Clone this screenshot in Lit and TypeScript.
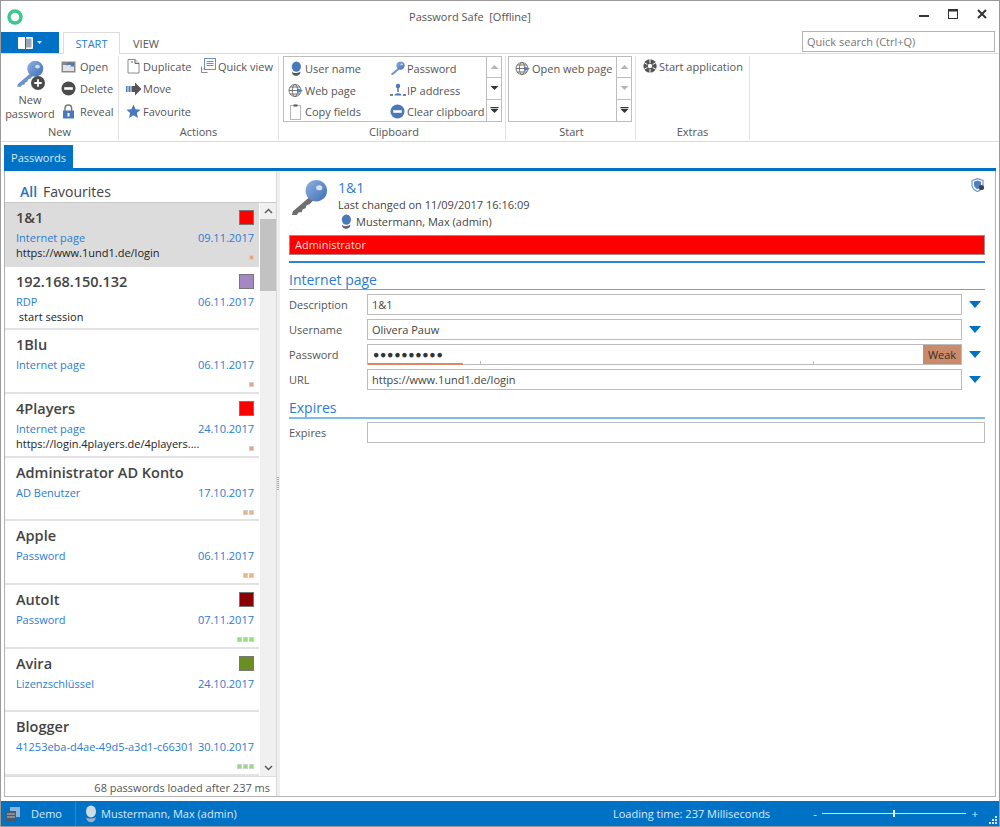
import { LitElement, html, css } from 'lit';
import { customElement } from 'lit/decorators.js';

const BLUE = '#0072c6';

const keyIcon = (shaft: string, size: number) => html`<svg width="${size}" height="${size}" viewBox="0 0 40 40">
  <defs><linearGradient id="kh" x1="0" y1="0" x2="1" y2="1"><stop offset="0" stop-color="#8fb2e2"/><stop offset="1" stop-color="#3f6db5"/></linearGradient></defs>
  <path d="M23 17 4 33l-1 4 5 0 2-3 3 0 1-3 3-1 1-3 3-1 5-5z" fill="${shaft}"/>
  <circle cx="28" cy="12" r="11" fill="url(#kh)"/>
  <ellipse cx="31" cy="9" rx="3.2" ry="2.6" fill="#d5e2f5"/>
</svg>`;

const userIcon = (body = '#4a78bd', base = '#555') => html`<svg width="14" height="16" viewBox="0 0 14 16">
  <ellipse cx="7.4" cy="5.6" rx="4.6" ry="5.2" fill="${body}"/>
  <path d="M3 10.4c1 2 7 2.2 8.6.2l-.6 2.2C9 15.6 5 15.4 3.4 13z" fill="${base}"/>
</svg>`;

const globeIcon = () => html`<svg width="16" height="15" viewBox="0 0 16 15">
  <g fill="none" stroke="#666" stroke-width=".9"><circle cx="7" cy="7.5" r="6"/><ellipse cx="7" cy="7.5" rx="2.6" ry="6"/><path d="M1 7.5h12M2 4h10M2 11h10"/></g>
  <path d="M10 5.5l5 2.2-5 2.4z" fill="#4a82c8"/>
</svg>`;

const circleMinus = (fill: string, size = 15) => html`<svg width="${size}" height="${size}" viewBox="0 0 15 15">
  <circle cx="7.5" cy="7.5" r="7" fill="${fill}"/><rect x="3.2" y="6.2" width="8.6" height="2.6" fill="#fff"/>
</svg>`;

const openIcon = () => html`<svg width="15" height="13" viewBox="0 0 15 13">
  <rect x=".5" y="1.5" width="14" height="11" fill="#8a8a8a"/><rect x="2" y="5" width="11" height="6" fill="#e4e4e4"/>
  <path d="M5 5c1-3 5-3.6 7-1.5l1-1v4H9l1.300-1.200C9 4.200 7 4.200 6.500 5.500z" fill="#4a78bd"/>
</svg>`;

const lockIcon = () => html`<svg width="13" height="15" viewBox="0 0 13 15">
  <path d="M3 7V4.300a3.300 3.300 0 0 1 6.600 0V7" fill="none" stroke="#777" stroke-width="1.5"/>
  <rect x="1" y="6.500" width="11" height="8" fill="#4a78bd"/><rect x="5.500" y="9" width="2" height="3.5" fill="#fff"/>
</svg>`;

const docIcon = () => html`<svg width="13" height="16" viewBox="0 0 13 16">
  <path d="M1 1.500h7l4 4v9.500H1z" fill="#fff" stroke="#8c8c8c"/><path d="M8 1.500v4h4" fill="#ddd" stroke="#666"/>
  <path d="M4 4h2" stroke="#666"/>
</svg>`;

const quickIcon = () => html`<svg width="16" height="16" viewBox="0 0 16 16">
  <rect x="4.500" y=".5" width="11" height="11" fill="#fff" stroke="#6f8fc0"/>
  <path d="M6.500 3.500h7M6.500 5.500h7M6.500 7.500h7" stroke="#8a8a8a"/>
  <path d="M1.500 8.500v6h6" fill="none" stroke="#888"/><path d="M3 11.500l2-2" stroke="#888"/>
</svg>`;

const moveIcon = () => html`<svg width="16" height="14" viewBox="0 0 16 14">
  <rect x="0" y="4" width="1.5" height="6" fill="#4a78bd"/><rect x="2.500" y="4" width="2" height="6" fill="#4a78bd"/>
  <path d="M5.500 4H9V.5L15.500 7 9 13.500V10H5.500z" fill="#555"/>
</svg>`;

const starIcon = () => html`<svg width="15" height="15" viewBox="0 0 15 15">
  <path d="M7.500.5l2.100 4.700 5 .5-3.800 3.300 1.200 5-4.500-2.700L3 14l1.200-5L.4 5.700l5-.5z" fill="#4a78bd"/>
</svg>`;

const clipIcon = () => html`<svg width="11" height="16" viewBox="0 0 11 16">
  <rect x=".5" y="1.500" width="10" height="14" fill="#fff" stroke="#b8b8b8"/><rect x="3.500" y=".5" width="4" height="2" fill="#555"/>
</svg>`;

const netIcon = () => html`<svg width="16" height="14" viewBox="0 0 16 14">
  <circle cx="8" cy="3" r="2.200" fill="#4a78bd"/><path d="M8 5v4" stroke="#4a78bd" stroke-width="1.5"/>
  <path d="M4.500 12.500c0-3 7-3 7 0z" fill="#4a78bd"/><path d="M0 12h3M13 12h3" stroke="#555" stroke-width="1.5"/>
</svg>`;

const gearIcon = () => html`<svg width="14" height="14" viewBox="0 0 14 14">
  <circle cx="7" cy="7" r="6.700" fill="#555"/>
  <g stroke="#fff" stroke-width="1"><path d="M7 0v4M7 10v4M.8 3.500l3.500 2M9.700 8.500l3.500 2M.8 10.500l3.500-2M9.700 5.500l3.500-2"/></g>
  <circle cx="7" cy="7" r="2.200" fill="#fff"/>
</svg>`;

const arrowBtn = (d: string, color: string) => html`<svg width="9" height="6" viewBox="0 0 9 6"><path d="${d}" fill="${color}"/></svg>`;

const UP = 'M4.500 1 8.500 5H.5z';
const DOWN = 'M.5 1h8L4.500 5z';
const MORE = 'M.5 0h8v1.200h-8zM.5 2h8L4.500 6z';

type Item = { name: string; type: string; date: string; url?: string; color?: string; dots: number; dot?: string };

const ITEMS: Item[] = [
  { name: '1&1', type: 'Internet page', date: '09.11.2017', url: 'https://www.1und1.de/login', color: '#ff0000', dots: 1, dot: '#eba47f' },
  { name: '192.168.150.132', type: 'RDP', date: '06.11.2017', url: ' start session', color: '#a488c4', dots: 0 },
  { name: '1Blu', type: 'Internet page', date: '06.11.2017', dots: 1, dot: '#eba47f' },
  { name: '4Players', type: 'Internet page', date: '24.10.2017', url: 'https://login.4players.de/4players....', color: '#ff0000', dots: 1, dot: '#eba47f' },
  { name: 'Administrator AD Konto', type: 'AD Benutzer', date: '17.10.2017', dots: 2, dot: '#ecb27f' },
  { name: 'Apple', type: 'Password', date: '06.11.2017', dots: 2, dot: '#ecb27f' },
  { name: 'AutoIt', type: 'Password', date: '07.11.2017', color: '#8b0000', dots: 3, dot: '#8fe07c' },
  { name: 'Avira', type: 'Lizenzschlüssel', date: '24.10.2017', color: '#6b8e23', dots: 0 },
  { name: 'Blogger', type: '41253eba-d4ae-49d5-a3d1-c66301', date: '30.10.2017', dots: 3, dot: '#8fe07c' },
];

@customElement('app-root')
export class AppRoot extends LitElement {
  static styles = css`
    :host {
      display: flex;
      flex-direction: column;
      width: 1000px;
      height: 827px;
      box-sizing: border-box;
      border: 1px solid #9a9a9a;
      background: #fff;
      font-family: 'Open Sans', 'Noto Sans', sans-serif;
      font-size: 11px;
      color: #444;
      overflow: hidden;
    }
    svg { display: block; flex: none; }

    .titlebar { display: flex; align-items: center; height: 31px; flex: none; }
    .logo { width: 29px; padding-left: 6px; box-sizing: border-box; }
    .title { flex: 1; text-align: center; color: #555; }
    .winbtns { width: 89px; display: flex; gap: 19px; padding-left: 9px; margin-bottom: 5px; box-sizing: border-box; align-items: center; }

    .tabrow { display: flex; height: 22px; flex: none; border-bottom: 1px solid #dcdcdc; box-sizing: border-box; }
    .appbtn { width: 58px; height: 21px; background: #0072c6; display: flex; align-items: center; justify-content: center; gap: 4px; }
    .tab { height: 22px; box-sizing: border-box; padding: 4px 13px 0; margin-left: 4px; text-transform: uppercase; color: #555; }
    .tab.on { border: 1px solid #dcdcdc; border-bottom: 0; background: #fff; color: #2b7cd3; padding: 3px 0 0; width: 57px; text-align: center; }
    .tab.off { margin-left: 0; }
    .search { margin-left: auto; margin-right: 4px; margin-top: -1px; width: 193px; height: 21px; box-sizing: border-box; border: 1px solid #b4b4b4; padding: 2px 4px; color: #777; background: #fff; }

    .ribbon { display: flex; height: 88px; flex: none; border-bottom: 1px solid #dcdcdc; box-sizing: border-box; }
    .group { display: flex; flex-direction: column; box-sizing: border-box; border-right: 1px solid #e2e2e2; margin: 2px 0 1px; }
    .gbody { flex: 1; display: flex; min-height: 0; }
    .glabel { text-align: center; height: 14px; line-height: 14px; margin-bottom: 1px; color: #555; }
    .g-new { width: 118px; }
    .g-act { width: 160px; }
    .g-clip { width: 227px; padding-left: 4px; }
    .g-start { width: 130px; padding-left: 2px; }
    .g-ext { width: 114px; }

    .bigbtn { width: 58px; display: flex; flex-direction: column; align-items: center; text-align: center; line-height: 14px; padding-top: 4px; color: #555; }
    .bigwrap { position: relative; width: 30px; height: 30px; margin-bottom: 3px; }
    .plus { position: absolute; right: 0; bottom: 0; width: 14px; height: 14px; }
    .col { display: flex; flex-direction: column; margin-top: -1px; }
    .btn { display: flex; align-items: center; height: 22.5px; gap: 4px; color: #555; white-space: nowrap; }
    .btn .ico { width: 15px; display: flex; justify-content: center; }
    .g-new .col { padding-left: 2px; }
    .g-act .col { padding-left: 7px; width: 81px; box-sizing: border-box; }
    .g-act .btn { gap: 2px; }
    .g-act .col + .col { padding-left: 0; width: auto; }
    .g-act .col + .col .btn { gap: 3px; }
    .g-ext .col { padding-left: 6px; }
    .g-ext .btn { gap: 2px; }

    .gallery { display: flex; height: 66px; border: 1px solid #bdbdbd; box-sizing: border-box; flex: 1; margin-right: 3px; }
    .gitems { flex: 1; display: grid; grid-template-columns: 102px 1fr; padding: 1px 0 0 4px; align-content: start; }
    .g-start .gitems { grid-template-columns: 1fr; padding-left: 6px; }
    .scroller { width: 14px; border-left: 1px solid #bdbdbd; display: grid; grid-template-rows: 1fr 1fr 1fr; flex: none; }
    .scroller div { display: flex; align-items: center; justify-content: center; border-bottom: 1px solid #bdbdbd; }
    .scroller div:last-child { border-bottom: 0; }
    .gitems .btn { height: 21.5px; gap: 2px; }

    .doctabs { flex: none; padding-top: 3px; height: 29px; box-sizing: border-box; border-bottom: 3px solid #0072c6; margin: 0 3px; }
    .doctab { width: 69px; height: 23px; background: #0072c6; color: #d8eafa; text-align: center; line-height: 25px; }

    .main { flex: 1; min-height: 0; display: flex; margin: 0 3px 4px 3px; border: 1px solid #b2b2b2; border-top: 0; }
    .left { width: 271px; flex: none; display: flex; flex-direction: column; }
    .filter { height: 32px; flex: none; box-sizing: border-box; padding: 11px 0 0 15px; font-size: 14px; line-height: 20px; border-bottom: 1px solid #c8c8c8; color: #444; }
    .filter b { color: #1f74c4; font-weight: 600; margin-right: 6px; }
    .listwrap { flex: 1; min-height: 0; display: flex; }
    .list { flex: 1; min-width: 0; display: grid; grid-template-rows: repeat(9, 1fr); }
    .item { box-sizing: border-box; padding: 3px 5px 0 11px; border-bottom: 2px solid #e3e3e3; display: flex; flex-direction: column; overflow: hidden; }
    .item.sel { background: #dcdcdc; border-bottom-color: #dcdcdc; }
    .r1 { display: flex; justify-content: space-between; align-items: flex-start; height: 24px; flex: none; }
    .name { font-size: 14.5px; font-weight: 600; color: #444; line-height: 24px; white-space: nowrap; }
    .swatch { width: 15px; height: 15px; box-sizing: border-box; border: 1px solid #777; margin-top: 4px; }
    .r2 { display: flex; color: #2b7cd3; height: 16px; line-height: 16px; flex: none; white-space: nowrap; overflow: hidden; }
    .r2 .t { flex: 1; min-width: 0; overflow: hidden; }
    .r3 { display: flex; justify-content: space-between; height: 16px; line-height: 14px; color: #222; flex: none; white-space: pre; }
    .dots { display: flex; gap: 1px; margin-left: auto; margin-top: 9px; height: 5px; }
    .dots i { display: block; width: 5px; height: 5px; box-sizing: border-box; border: 1px solid #d0d0d0; }
    .scrollbar { width: 17px; flex: none; background: #f0f0f0; display: flex; flex-direction: column; align-items: center; border-left: 1px solid #fff; box-sizing: border-box; }
    .sb-end { height: 16px; flex: none; display: flex; align-items: center; justify-content: center; }
    .thumb { width: 100%; height: 72px; background: #c2c2c2; }
    .sb-fill { flex: 1; }
    .loaded { height: 20px; flex: none; border-top: 1px solid #ddd; box-sizing: border-box; text-align: right; line-height: 22px; padding-right: 6px; color: #555; }

    .splitter { width: 2px; flex: none; background: #f0f0f0; border-left: 1px solid #d8d8d8; border-right: 1px solid #eee; display: flex; align-items: center; justify-content: center; }
    .grip { width: 2px; height: 13px; background: repeating-linear-gradient(#aaa 0 1px, transparent 1px 2px); }

    .right { flex: 1; min-width: 0; padding: 0 10px 0 9px; display: flex; flex-direction: column; }
    .head { display: flex; height: 64px; flex: none; position: relative; padding-top: 8px; box-sizing: border-box; }
    .head .txt { margin-left: 10px; }
    .head h1 { margin: 0; font-size: 14px; font-weight: 400; color: #2b7cd3; line-height: 17px; }
    .head .chg { line-height: 17px; color: #444; }
    .head .usr { display: flex; gap: 3px; align-items: center; line-height: 17px; margin-left: 1px; }
    .shield { position: absolute; right: 0; top: 7px; }
    .redbar { height: 20px; flex: none; background: #ff0000; color: #ffd9d9; border: 1px solid #a88; box-sizing: border-box; padding-left: 5px; line-height: 18px; }
    .rule { height: 2px; background: #2b86cf; margin-top: 6px; flex: none; }
    h2 { margin: 0; font-size: 14px; font-weight: 400; color: #2b7cd3; line-height: 18px; border-bottom: 1px solid #5aa8e0; flex: none; }
    .sec1 { margin-top: 8px; }
    .sec2 { margin-top: 9px; border-bottom: 2px solid #7fbbe8; }
    .rows { display: flex; flex-direction: column; gap: 4px; padding-top: 4px; }
    .sec2 + .rows { padding-top: 3px; }
    .row { display: grid; grid-template-columns: 78px 1fr 23px; align-items: center; height: 21px; }
    .row.wide { grid-template-columns: 78px 1fr; }
    .lbl { color: #555; }
    .field { position: relative; height: 21px; box-sizing: border-box; border: 1px solid #bcbcbc; padding-left: 4px; line-height: 19px; color: #444; display: flex; }
    .pw { letter-spacing: 0.7px; font-size: 10.5px; color: #333; margin-left: 1px; }
    .strength { position: absolute; left: 0; bottom: -1px; width: 95px; height: 2px; background: #d98a65; }
    .tick { position: absolute; bottom: 0; width: 1px; height: 3px; background: #bbb; }
    .weak { position: absolute; right: 0; top: 0; bottom: 0; width: 38px; text-align: center; background: #c98b6b; color: #3d2c22; }
    .drop { display: flex; justify-content: flex-end; padding-right: 4px; }

    .status { height: 25px; flex: none; background: #0072c6; color: #d9ebfa; display: flex; align-items: center; position: relative; }
    .st-db { width: 75px; display: flex; align-items: center; gap: 10px; padding-left: 4px; box-sizing: border-box; border-right: 1px solid #2a88d0; height: 100%; }
    .st-user { display: flex; align-items: center; gap: 3px; padding-left: 8px; }
    .st-time { margin-left: auto; width: 198px; }
    .zoom { display: flex; align-items: center; width: 168px; margin-right: 20px; gap: 5px; }
    .zoom span { width: 8px; text-align: center; }
    .zoom span:first-child { margin-right: -2px; }
    .track { position: relative; flex: 1; height: 1px; background: #cfe4f6; }
    .knob { position: absolute; left: 71px; top: -3px; width: 2px; height: 7px; background: #e6f2fb; }
    .gripper { position: absolute; right: 1px; bottom: 1px; }
  `;

  btn(icon: unknown, label: string) {
    return html`<div class="btn"><span class="ico">${icon}</span><span>${label}</span></div>`;
  }

  renderRibbon() {
    return html`<div class="ribbon">
      <div class="group g-new">
        <div class="gbody">
          <div class="bigbtn">
            <div class="bigwrap">${keyIcon('#6c93cf', 29)}
              <svg class="plus" viewBox="0 0 15 15"><circle cx="7.5" cy="7.5" r="7.5" fill="#4b4b4b"/><path d="M3.500 7.500h8M7.500 3.500v8" stroke="#fff" stroke-width="2"/></svg>
            </div>
            New<br />password
          </div>
          <div class="col">
            ${this.btn(openIcon(), 'Open')}
            ${this.btn(circleMinus('#4b4b4b'), 'Delete')}
            ${this.btn(lockIcon(), 'Reveal')}
          </div>
        </div>
        <div class="glabel">New</div>
      </div>
      <div class="group g-act">
        <div class="gbody">
          <div class="col">
            ${this.btn(docIcon(), 'Duplicate')}
            ${this.btn(moveIcon(), 'Move')}
            ${this.btn(starIcon(), 'Favourite')}
          </div>
          <div class="col">${this.btn(quickIcon(), 'Quick view')}</div>
        </div>
        <div class="glabel">Actions</div>
      </div>
      <div class="group g-clip">
        <div class="gbody">
          <div class="gallery">
            <div class="gitems">
              ${this.btn(userIcon(), 'User name')}
              ${this.btn(keyIcon('#6c93cf', 15), 'Password')}
              ${this.btn(globeIcon(), 'Web page')}
              ${this.btn(netIcon(), 'IP address')}
              ${this.btn(clipIcon(), 'Copy fields')}
              ${this.btn(circleMinus('#4a78bd'), 'Clear clipboard')}
            </div>
            <div class="scroller">
              <div>${arrowBtn(UP, '#b5b5b5')}</div><div>${arrowBtn(DOWN, '#333')}</div><div>${arrowBtn(MORE, '#333')}</div>
            </div>
          </div>
        </div>
        <div class="glabel">Clipboard</div>
      </div>
      <div class="group g-start">
        <div class="gbody">
          <div class="gallery">
            <div class="gitems">${this.btn(globeIcon(), 'Open web page')}</div>
            <div class="scroller">
              <div>${arrowBtn(UP, '#b5b5b5')}</div><div>${arrowBtn(DOWN, '#b5b5b5')}</div><div>${arrowBtn(MORE, '#333')}</div>
            </div>
          </div>
        </div>
        <div class="glabel">Start</div>
      </div>
      <div class="group g-ext">
        <div class="gbody"><div class="col">${this.btn(gearIcon(), 'Start application')}</div></div>
        <div class="glabel">Extras</div>
      </div>
    </div>`;
  }

  renderItem(it: Item, i: number) {
    return html`<div class="item ${i === 0 ? 'sel' : ''}">
      <div class="r1">
        <span class="name">${it.name}</span>
        ${it.color ? html`<span class="swatch" style="background:${it.color}"></span>` : ''}
      </div>
      <div class="r2"><span class="t">${it.type}</span><span>${it.date}</span></div>
      <div class="r3">
        <span>${it.url ?? ''}</span>
        <span class="dots">${Array.from({ length: it.dots }, () => html`<i style="background:${it.dot}"></i>`)}</span>
      </div>
    </div>`;
  }

  renderField(label: string, value: string) {
    return html`<div class="row">
      <span class="lbl">${label}</span>
      <div class="field">${value}</div>
      <div class="drop">${this.dropArrow()}</div>
    </div>`;
  }

  dropArrow() {
    return html`<svg width="12" height="7" viewBox="0 0 12 7"><path d="M0 0h12L6 7z" fill="${BLUE}"/></svg>`;
  }

  render() {
    return html`
      <div class="titlebar">
        <div class="logo"><svg width="16" height="16" viewBox="0 0 16 16"><circle cx="8" cy="8" r="6" fill="none" stroke="#3cc88c" stroke-width="3.4"/></svg></div>
        <div class="title">Password Safe &nbsp;[Offline]</div>
        <div class="winbtns">
          <svg width="10" height="10" viewBox="0 0 10 10"><rect y="6" width="10" height="2" fill="#333"/></svg>
          <svg width="10" height="10" viewBox="0 0 10 10"><rect x=".5" y=".5" width="9" height="9" fill="none" stroke="#333"/><rect width="10" height="2.5" fill="#333"/></svg>
          <svg width="10" height="10" viewBox="0 0 10 10"><path d="M1 1l8 8M9 1l-8 8" stroke="#333" stroke-width="2"/></svg>
        </div>
      </div>
      <div class="tabrow">
        <div class="appbtn">
          <svg width="15" height="12" viewBox="0 0 15 12"><rect width="15" height="12" rx="1" fill="#fff"/><rect x="8" y="1.5" width="5.5" height="9" fill="#9aa7b3"/><rect x="7" width="1" height="12" fill="#0072c6"/></svg>
          <svg width="5" height="3" viewBox="0 0 5 3"><path d="M0 0h5L2.500 3z" fill="#d5e7f6"/></svg>
        </div>
        <div class="tab on">Start</div>
        <div class="tab off">View</div>
        <div class="search">Quick search (Ctrl+Q)</div>
      </div>
      ${this.renderRibbon()}
      <div class="doctabs"><div class="doctab">Passwords</div></div>
      <div class="main">
        <div class="left">
          <div class="filter"><b>All</b>Favourites</div>
          <div class="listwrap">
            <div class="list">${ITEMS.map((it, i) => this.renderItem(it, i))}</div>
            <div class="scrollbar">
              <div class="sb-end"><svg width="9" height="6" viewBox="0 0 9 6"><path d="M1 5l3.500-3.500L8 5" fill="none" stroke="#555" stroke-width="1.4"/></svg></div>
              <div class="thumb"></div>
              <div class="sb-fill"></div>
              <div class="sb-end"><svg width="9" height="6" viewBox="0 0 9 6"><path d="M1 1l3.500 3.500L8 1" fill="none" stroke="#555" stroke-width="1.4"/></svg></div>
            </div>
          </div>
          <div class="loaded">68 passwords loaded after 237 ms</div>
        </div>
        <div class="splitter"><div class="grip"></div></div>
        <div class="right">
          <div class="head">
            ${keyIcon('#6e6e6e', 39)}
            <div class="txt">
              <h1>1&amp;1</h1>
              <div class="chg">Last changed on 11/09/2017 16:16:09</div>
              <div class="usr">${userIcon('#4a78bd', '#666')}Mustermann, Max (admin)</div>
            </div>
            <svg class="shield" width="14" height="14" viewBox="0 0 14 14">
              <path d="M1 2.500 6.500.6 12 2.500v4.500c0 3-3 5.500-5.500 6.500C4 12.500 1 10 1 7z" fill="#fff" stroke="#6f94cc" stroke-width="1.2"/>
              <path d="M3 3.800 6.500 2.600 10 3.800v3c0 2-2 3.700-3.500 4.400C5 10.500 3 8.800 3 6.800z" fill="#4f7dbd"/>
              <circle cx="10.5" cy="9.500" r="2.600" fill="#444"/>
            </svg>
          </div>
          <div class="redbar">Administrator</div>
          <div class="rule"></div>
          <h2 class="sec1">Internet page</h2>
          <div class="rows">
            ${this.renderField('Description', '1&1')}
            ${this.renderField('Username', 'Olivera Pauw')}
            <div class="row">
              <span class="lbl">Password</span>
              <div class="field">
                <span class="pw">●●●●●●●●●●</span>
                <i class="strength"></i>
                <i class="tick" style="left:112px"></i>
                <i class="tick" style="left:445px"></i>
                <span class="weak">Weak</span>
              </div>
              <div class="drop">${this.dropArrow()}</div>
            </div>
            ${this.renderField('URL', 'https://www.1und1.de/login')}
          </div>
          <h2 class="sec2">Expires</h2>
          <div class="rows">
            <div class="row wide"><span class="lbl">Expires</span><div class="field"></div></div>
          </div>
        </div>
      </div>
      <div class="status">
        <div class="st-db">
          <svg width="16" height="16" viewBox="0 0 16 16"><rect x="5" y="1" width="10" height="10" fill="#8db4dd"/><rect x="1" y="5" width="10" height="10" fill="#4b5a68"/><path d="M2 8h8M2 11h8" stroke="#b9c4ce"/></svg>
          <span>Demo</span>
        </div>
        <div class="st-user">
          <svg width="14" height="18" viewBox="0 0 14 18"><ellipse cx="7" cy="6.5" rx="5" ry="6" fill="#d0dbe6"/><path d="M2 12c1 2 8 2 10 0l-1 3c-2 3-6 3-8 0z" fill="#9fb2c4"/></svg>
          <span>Mustermann, Max (admin)</span>
        </div>
        <div class="st-time">Loading time: 237 Milliseconds</div>
        <div class="zoom"><span>-</span><div class="track"><i class="knob"></i></div><span>+</span></div>
        <svg class="gripper" width="9" height="9" viewBox="0 0 9 9" fill="#d8e8f6"><rect x="6" y="0" width="2" height="2"/><rect x="3" y="3" width="2" height="2"/><rect x="6" y="3" width="2" height="2"/><rect x="0" y="6" width="2" height="2"/><rect x="3" y="6" width="2" height="2"/><rect x="6" y="6" width="2" height="2"/></svg>
      </div>
    `;
  }
}
